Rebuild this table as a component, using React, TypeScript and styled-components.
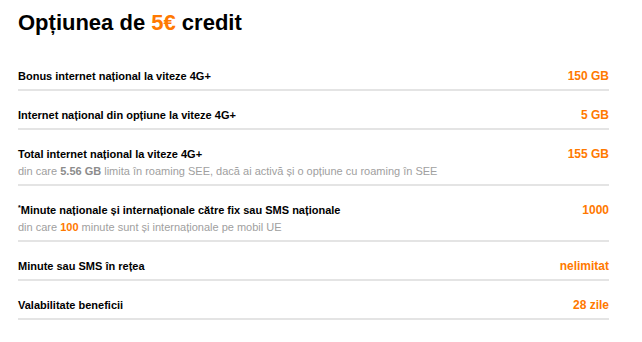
import styled, { createGlobalStyle } from 'styled-components';

const GlobalStyle = createGlobalStyle`
	body {
		margin: 0;
		background: #fff;
		font-family: 'Liberation Sans', Arial, sans-serif;
		color: #000;
	}
`;

const Container = styled.div`
	width: 591px;
	margin-left: 18px;
`;

const Title = styled.h1`
	margin: 10px 0 17px;
	font-size: 22px;
	line-height: 25px;
	font-weight: bold;
	color: #000;
`;

const Accent = styled.span`
	color: #ff7900;
`;

const Row = styled.div`
	display: flex;
	justify-content: space-between;
	align-items: flex-start;
	padding: 17px 0 6px;
	border-bottom: 2px solid #e4e4e4;
`;

const Info = styled.div`
	display: flex;
	flex-direction: column;
	gap: 3px;
`;

const Label = styled.span`
	font-size: 11px;
	line-height: 14px;
	font-weight: bold;
	color: #000;
`;

const Star = styled.sup`
	font-size: 7px;
	vertical-align: 4px;
	line-height: 0;
`;

const Note = styled.span`
	font-size: 11px;
	line-height: 14px;
	color: #a0a0a0;
`;

const NoteStrong = styled.b<{ accent?: boolean }>`
	color: ${(props) => (props.accent ? '#ff7900' : '#8c8c8c')};
`;

const Value = styled.span`
	font-size: 12px;
	line-height: 14px;
	font-weight: bold;
	color: #ff7900;
	white-space: nowrap;
`;

export default function App() {
	return (
		<>
			<GlobalStyle />
			<Container>
				<Title>
					Opțiunea de <Accent>5€</Accent> credit
				</Title>

				<Row>
					<Info>
						<Label>Bonus internet național la viteze 4G+</Label>
					</Info>
					<Value>150 GB</Value>
				</Row>

				<Row>
					<Info>
						<Label>Internet național din opțiune la viteze 4G+</Label>
					</Info>
					<Value>5 GB</Value>
				</Row>

				<Row>
					<Info>
						<Label>Total internet național la viteze 4G+</Label>
						<Note>
							din care <NoteStrong>5.56 GB</NoteStrong> limita în roaming SEE, dacă ai activă și o
							opțiune cu roaming în SEE
						</Note>
					</Info>
					<Value>155 GB</Value>
				</Row>

				<Row>
					<Info>
						<Label>
							<Star>*</Star>Minute naționale și internaționale către fix sau SMS naționale
						</Label>
						<Note>
							din care <NoteStrong accent>100</NoteStrong> minute sunt și internaționale pe mobil UE
						</Note>
					</Info>
					<Value>1000</Value>
				</Row>

				<Row>
					<Info>
						<Label>Minute sau SMS în rețea</Label>
					</Info>
					<Value>nelimitat</Value>
				</Row>

				<Row>
					<Info>
						<Label>Valabilitate beneficii</Label>
					</Info>
					<Value>28 zile</Value>
				</Row>
			</Container>
		</>
	);
}
